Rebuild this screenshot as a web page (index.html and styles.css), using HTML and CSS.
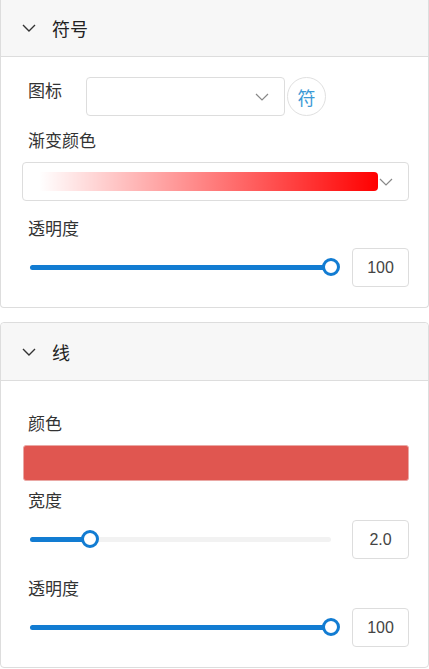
FILE: index.html
```html
<!DOCTYPE html>
<html lang="zh-CN">
<head>
  <meta charset="UTF-8">
  <title>样式设置</title>
  <link rel="stylesheet" href="styles.css">
</head>
<body>
  <div class="panel first">
    <div class="panel-head">
      <svg class="caret" width="14" height="8" viewBox="0 0 14 8"><polyline points="1,1 7,7 13,1" fill="none" stroke="#333" stroke-width="1.4"/></svg>
      <span>符号</span>
    </div>
    <div class="panel-body">
      <div class="icon-row">
        <label class="lbl inline">图标</label>
        <div class="select icon-select">
          <svg class="arrow" width="14" height="8" viewBox="0 0 14 8"><polyline points="1,1 7,7 13,1" fill="none" stroke="#888" stroke-width="1.2"/></svg>
        </div>
        <button class="round-btn">符</button>
      </div>

      <label class="lbl l-grad">渐变颜色</label>
      <div class="select grad-select">
        <div class="grad-bar"></div>
        <svg class="arrow" width="14" height="8" viewBox="0 0 14 8"><polyline points="1,1 7,7 13,1" fill="none" stroke="#888" stroke-width="1.2"/></svg>
      </div>

      <label class="lbl l-alpha">透明度</label>
      <div class="slider-row">
        <div class="slider">
          <div class="track"></div>
          <div class="fill" style="width: 100%"></div>
          <div class="thumb" style="left: 100%"></div>
        </div>
        <div class="num">100</div>
      </div>
    </div>
  </div>

  <div class="panel">
    <div class="panel-head">
      <svg class="caret" width="14" height="8" viewBox="0 0 14 8"><polyline points="1,1 7,7 13,1" fill="none" stroke="#333" stroke-width="1.4"/></svg>
      <span>线</span>
    </div>
    <div class="panel-body line-body">
      <label class="lbl l-color">颜色</label>
      <div class="color-bar"></div>

      <label class="lbl l-width">宽度</label>
      <div class="slider-row">
        <div class="slider">
          <div class="track"></div>
          <div class="fill" style="width: 20%"></div>
          <div class="thumb" style="left: 20%"></div>
        </div>
        <div class="num">2.0</div>
      </div>

      <label class="lbl l-alpha2">透明度</label>
      <div class="slider-row">
        <div class="slider">
          <div class="track"></div>
          <div class="fill" style="width: 100%"></div>
          <div class="thumb" style="left: 100%"></div>
        </div>
        <div class="num">100</div>
      </div>
    </div>
  </div>
</body>
</html>
```

FILE: styles.css
```css
body { margin: 0; background: #fff; font-family: "Noto Sans CJK SC", "Liberation Sans", sans-serif; color: #333; }

.panel { width: 429px; border: 1px solid #ddd; border-radius: 4px; background: #fff; margin-bottom: 14px; box-sizing: border-box; }
.panel.first { border-top: 0; border-radius: 0 0 4px 4px; }
.panel-head { height: 56px; background: #f7f7f7; border-bottom: 1px solid #ddd; display: flex; align-items: center; padding-left: 21px; font-size: 18px; color: #222; }
.panel + .panel .panel-head { height: 57px; border-radius: 4px 4px 0 0; }
.panel-head .caret { margin-right: 16px; }

.panel-body { padding: 20px 19px 20px 21px; }
.line-body { padding-top: 30px; }

.lbl { display: block; font-size: 17px; line-height: 24px; padding-left: 6px; color: #333; }
.lbl.inline { width: 64px; padding-top: 1px; box-sizing: border-box; }

.icon-row { display: flex; align-items: flex-start; }
.select { border: 1px solid #ddd; border-radius: 4px; box-sizing: border-box; height: 39px; display: flex; align-items: center; position: relative; }
.select .arrow { position: absolute; right: 15px; top: 15px; }
.icon-select { width: 199px; }
.round-btn { width: 39px; height: 39px; border-radius: 50%; border: 1px solid #e0e0e0; background: #fff; margin-left: 2px; padding: 0; color: #3d9ad6; font-family: "Noto Sans CJK SC", sans-serif; font-size: 18px; }

.l-grad { margin-top: 12px; }
.grad-select { margin-top: 10px; }
.grad-bar { margin-left: 16px; width: 339px; height: 19px; border-radius: 0 4px 4px 0; background: linear-gradient(to right, rgba(255,0,0,0), #ff0000); }

.l-alpha { margin-top: 15px; }
.slider-row { display: flex; align-items: center; margin-top: 8px; }
.slider { flex: 1; position: relative; height: 39px; margin: 0 21px 0 8px; }
.track { position: absolute; left: 0; right: 0; top: 17px; height: 5px; border-radius: 3px; background: #f2f2f2; }
.fill { position: absolute; left: 0; top: 17px; height: 5px; border-radius: 3px; background: #127cd2; }
.thumb { position: absolute; top: 10px; width: 18px; height: 18px; margin-left: -9px; border: 3px solid #127cd2; border-radius: 50%; background: #fff; box-sizing: border-box; }
.num { width: 57px; height: 39px; border: 1px solid #ddd; border-radius: 4px; box-sizing: border-box; display: flex; align-items: center; justify-content: center; font-family: "Liberation Sans", sans-serif; font-size: 16px; color: #444; }

.color-bar { margin-top: 10px; height: 36px; margin-left: 1px; border: 1px solid #eaa8a5; border-radius: 3px; background: #e05650; box-sizing: border-box; }
.l-width { margin-top: 7px; }
.l-alpha2 { margin-top: 17px; }
```
